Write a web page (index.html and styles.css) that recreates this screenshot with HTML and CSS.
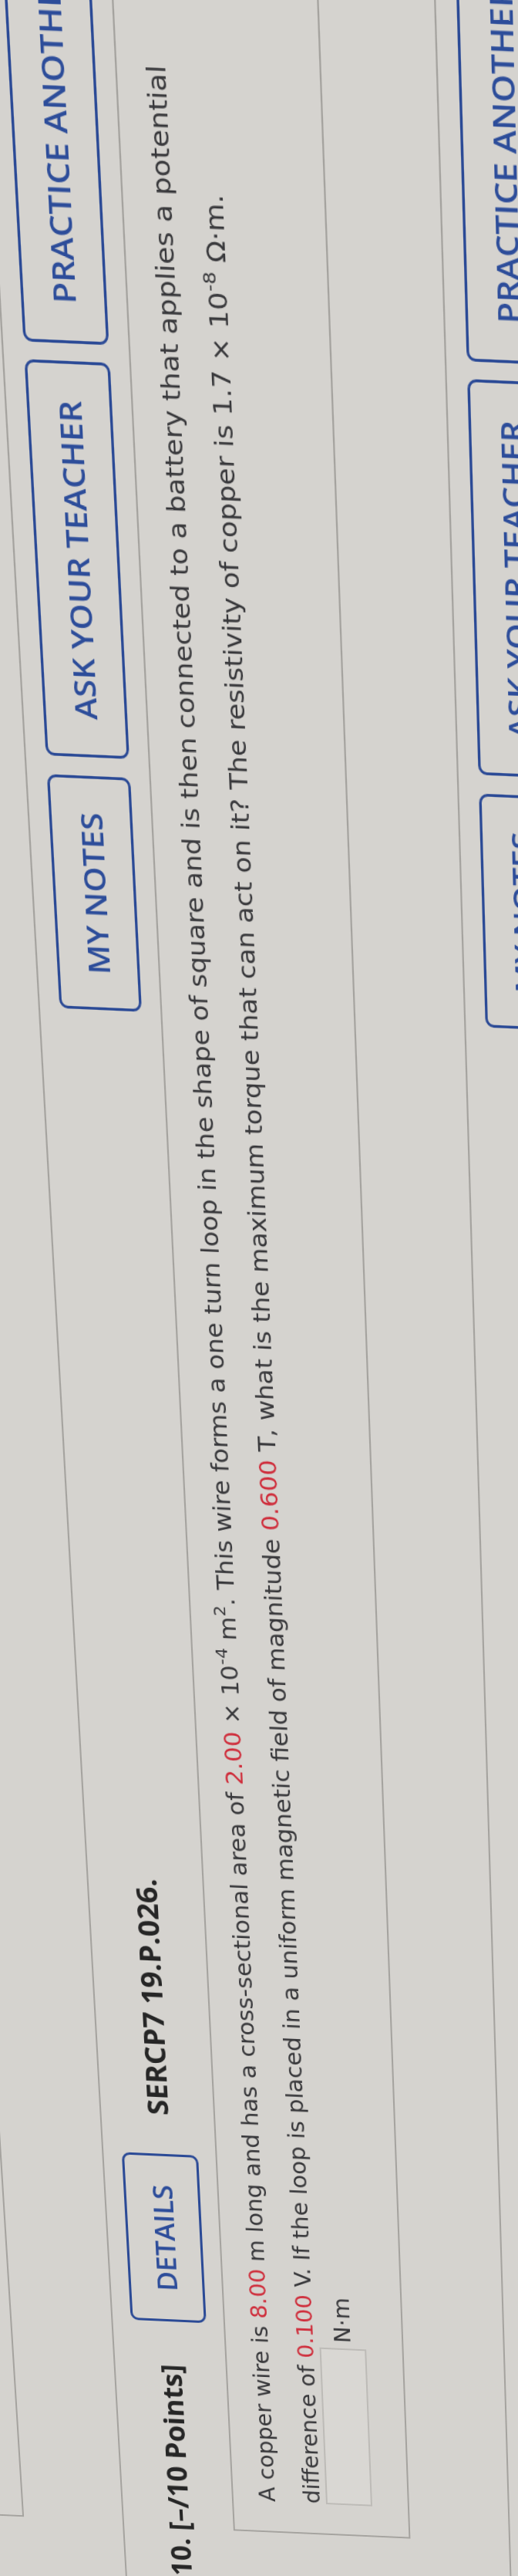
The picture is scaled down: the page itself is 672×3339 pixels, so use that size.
FILE: index.html
```
<!DOCTYPE html>
<html lang="en">
<head>
<meta charset="utf-8">
<title>SERCP7 19.P.026.</title>
<link rel="stylesheet" href="styles.css">
</head>
<body>
<div class="viewport">
  <div class="sheet">
    <div class="prev-box"></div>

    <section class="question">
      <div class="q-header">
        <div class="q-left">
          <span class="q-num">10. [–/10 Points]</span>
          <span class="btn btn-details">DETAILS</span>
          <span class="q-id">SERCP7 19.P.026.</span>
        </div>
        <div class="q-right">
          <span class="btn btn-notes">MY NOTES</span>
          <span class="btn btn-ask">ASK YOUR TEACHER</span>
          <span class="btn btn-practice">PRACTICE ANOTHER</span>
        </div>
      </div>
      <div class="q-body">
        <p class="q-text">A copper wire is <span class="val">8.00</span> m long and has a cross-sectional area of <span class="val">2.00</span> × 10<sup>-4</sup> m<sup>2</sup>. This wire forms a one turn loop in the shape of square and is then connected to a battery that applies a potential<br>difference of <span class="val">0.100</span> V. If the loop is placed in a uniform magnetic field of magnitude <span class="val">0.600</span> T, what is the maximum torque that can act on it? The resistivity of copper is 1.7 × 10<sup>-8</sup> Ω·m.</p>
        <div class="answer-row">
          <span class="answer-box"></span>
          <span class="unit">N·m</span>
        </div>
      </div>
    </section>

    <section class="question">
      <div class="q-header">
        <div class="q-left"></div>
        <div class="q-right">
          <span class="btn btn-notes">MY NOTES</span>
          <span class="btn btn-ask">ASK YOUR TEACHER</span>
          <span class="btn btn-practice">PRACTICE ANOTHER</span>
        </div>
      </div>
    </section>
  </div>
</div>
</body>
</html>
```

FILE: styles.css
```
html, body {
  margin: 0;
  padding: 0;
  background: #d5d3cf;
}

.viewport {
  width: 672px;
  height: 3339px;
  overflow: hidden;
  background: #d5d3cf;
}

/* the photographed screen: a page laid out normally, then projected
   (rotated ~92deg with perspective) the way the camera saw it */
.sheet {
  width: 3300px;
  height: 900px;
  display: flex;
  flex-direction: column;
  background: #d5d3cf;
  transform-origin: 0 0;
  transform: matrix3d(-0.061407, -1.124990, 0, -0.000050211,
                      0.989958, 0.044548, 0, 0,
                      0, 0, 1, 0,
                      -30.287, 3417.61, 0, 1);
}

.prev-box {
  height: 70px;
  margin-left: 165px;
  border-left: 2px solid #a5a39f;
  border-bottom: 2px solid #a5a39f;
  flex-shrink: 0;
}

.question {
  margin-top: 128px;
  border-top: 2px solid #a5a39f;
  flex-shrink: 0;
}

.q-header {
  height: 142px;
  box-sizing: border-box;
  padding: 0 176px 0 95px;
  display: flex;
  align-items: center;
  justify-content: space-between;
}

.q-left,
.q-right {
  display: flex;
  align-items: center;
}

.q-num,
.q-id {
  font-family: "Open Sans", "Liberation Sans", sans-serif;
  font-weight: 700;
  font-size: 36px;
  color: #262626;
  white-space: nowrap;
}

.q-num {
  width: 285px;
  flex-shrink: 0;
  margin-right: 52px;
}

.btn {
  box-sizing: border-box;
  height: 97px;
  display: flex;
  align-items: center;
  justify-content: center;
  flex-shrink: 0;
  border: 3px solid #2b4a96;
  border-radius: 10px;
  font-family: "Open Sans", "Liberation Sans", sans-serif;
  font-weight: 600;
  font-size: 35px;
  color: #2d4d9a;
  white-space: nowrap;
}

.btn-details {
  width: 216px;
  margin-right: 49px;
}

.btn-notes { width: 254px; }
.btn-ask { width: 413px; margin-left: 20px; }
.btn-practice { width: 417px; margin-left: 18px; }

.q-body {
  margin-left: 159px;
  border: 2px solid #a5a39f;
  border-right: none;
  padding: 15px 0 46px 39px;
}

.q-text {
  margin: 0;
  font-family: "DejaVu Sans", Verdana, sans-serif;
  font-size: 29px;
  line-height: 58px;
  color: #38383b;
  white-space: nowrap;
}

.q-text sup {
  font-size: 0.7em;
  line-height: 0;
  vertical-align: 0.6em;
}

.val {
  color: #cf2e3c;
}

.answer-row {
  margin-top: -11px;
  height: 60px;
  display: flex;
  align-items: center;
}

.answer-box {
  box-sizing: border-box;
  width: 207px;
  height: 60px;
  border: 2px solid #bdbbb7;
  background: #d9d7d3;
}

.unit {
  margin-left: 7px;
  font-family: "DejaVu Sans", Verdana, sans-serif;
  font-size: 29px;
  color: #38383b;
}
```
